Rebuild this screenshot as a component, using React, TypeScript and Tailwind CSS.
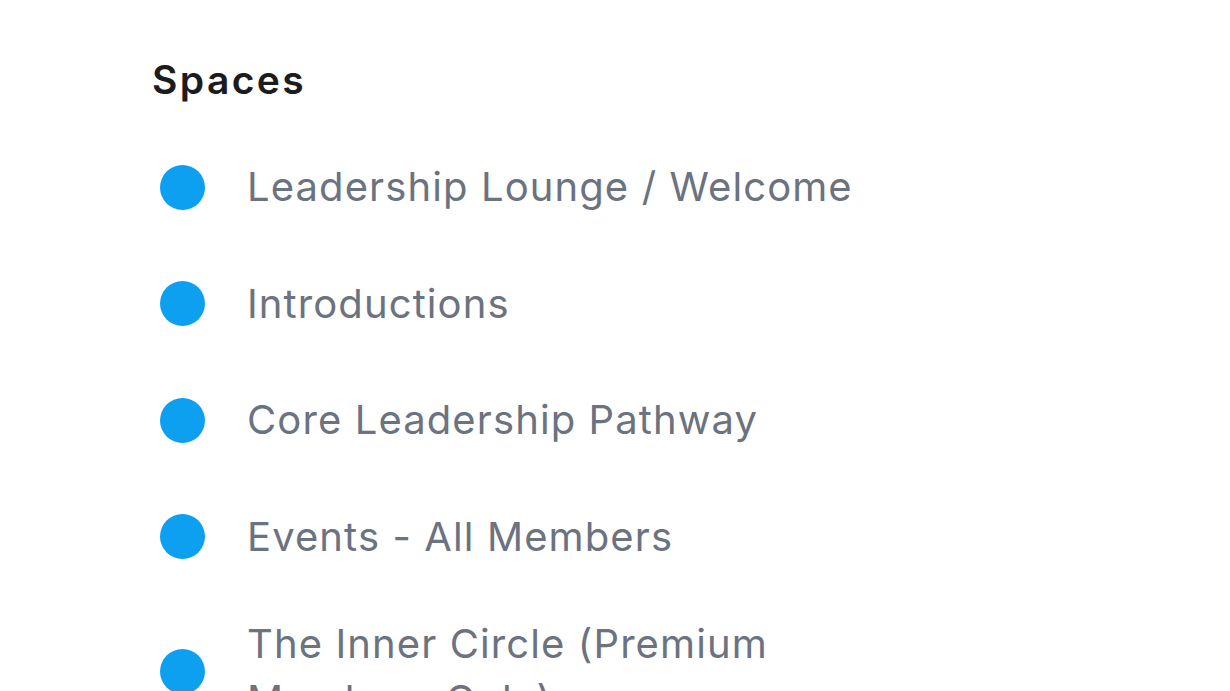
const spaces = [
  "Leadership Lounge / Welcome",
  "Introductions",
  "Core Leadership Pathway",
  "Events - All Members",
  "The Inner Circle (Premium Members Only)",
];

export default function App() {
  return (
    <div
      className="min-h-screen bg-white pl-[152px] pt-[52px]"
      style={{ fontFamily: "Inter, 'Noto Sans', sans-serif" }}
    >
      <h2 className="text-[39px] font-semibold leading-[56px] tracking-[2.4px] text-[#1c1c1e]">Spaces</h2>
      <ul className="mt-[41.5px] flex flex-col gap-[41.5px] pl-2">
        {spaces.map((name) => (
          <li key={name} className="flex min-h-[75px] items-center gap-[42px]">
            <span className="h-[45px] w-[45px] shrink-0 rounded-full bg-[#0ea0f0]"></span>
            <span className="w-[640px] text-[40px] leading-[56px] tracking-[1.1px] text-[#6b7280]">{name}</span>
          </li>
        ))}
      </ul>
    </div>
  );
}
